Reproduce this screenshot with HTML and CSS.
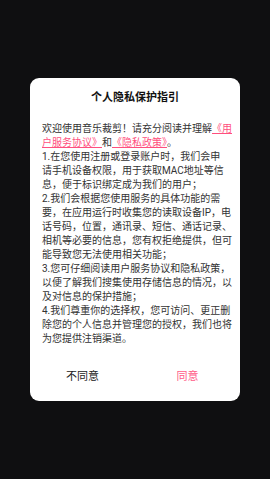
FILE: index.html
```
<!DOCTYPE html>
<html>
<head>
	<title>个人隐私保护指引</title>
	<meta charset="utf-8">
	<link rel="stylesheet" href="styles.css">
</head>
<body>
<div class="mask">
	<div class="dialog">
		<h3 class="dialog-title">个人隐私保护指引</h3>
		<div class="dialog-body">
			<p>欢迎使用音乐裁剪！请充分阅读并理解<a href="#">《用<br>户服务协议》</a>和<a href="#">《隐私政策》</a>。</p>
			<p>1.在您使用注册或登录账户时，我们会申<br>请手机设备权限，用于获取MAC地址等信<br>息，便于标识绑定成为我们的用户；</p>
			<p>2.我们会根据您使用服务的具体功能的需<br>要，在应用运行时收集您的读取设备IP，电<br>话号码，位置，通讯录、短信、通话记录、<br>相机等必要的信息，您有权拒绝提供，但可<br>能导致您无法使用相关功能；</p>
			<p>3.您可仔细阅读用户服务协议和隐私政策，<br>以便了解我们搜集使用存储信息的情况，以<br>及对信息的保护措施；</p>
			<p>4.我们尊重你的选择权，您可访问、更正删<br>除您的个人信息并管理您的授权，我们也将<br>为您提供注销渠道。</p>
		</div>
		<div class="dialog-btns">
			<span class="btn">不同意</span>
			<span class="btn btn-ok">同意</span>
		</div>
	</div>
</div>
</body>
</html>
```
FILE: styles.css
```
html, body{
	margin: 0;
	padding: 0;
	height: 100%;
}
body{
	background-color: #0f0f11;
	font-family: Roboto, "Noto Sans CJK SC", sans-serif;
}
.mask{
	padding-top: 78px;
}
.dialog{
	width: 210px;
	margin: 0 auto;
	background-color: #fff;
	border-radius: 9px;
	padding: 10px 0 11px;
	box-sizing: border-box;
}
.dialog-title{
	margin: 0;
	text-align: center;
	font-family: "Noto Sans CJK SC", sans-serif;
	font-size: 11px;
	line-height: 16px;
	font-weight: bold;
	color: #111;
}
.dialog-body{
	margin-top: 18px;
	padding: 0 6px 0 12px;
	font-size: 10px;
	line-height: 14px;
	color: #333;
	white-space: nowrap;
}
.dialog-body p{
	margin: 0;
}
.dialog-body a{
	color: #ff4f7e;
	text-decoration: underline;
}
.dialog-btns{
	display: flex;
	margin-top: 14px;
	height: 30px;
	line-height: 30px;
}
.btn{
	flex: 1;
	text-align: center;
	font-family: "Noto Sans CJK SC", sans-serif;
	font-size: 11px;
	color: #222;
}
.btn-ok{
	color: #ff5b88;
}
```
